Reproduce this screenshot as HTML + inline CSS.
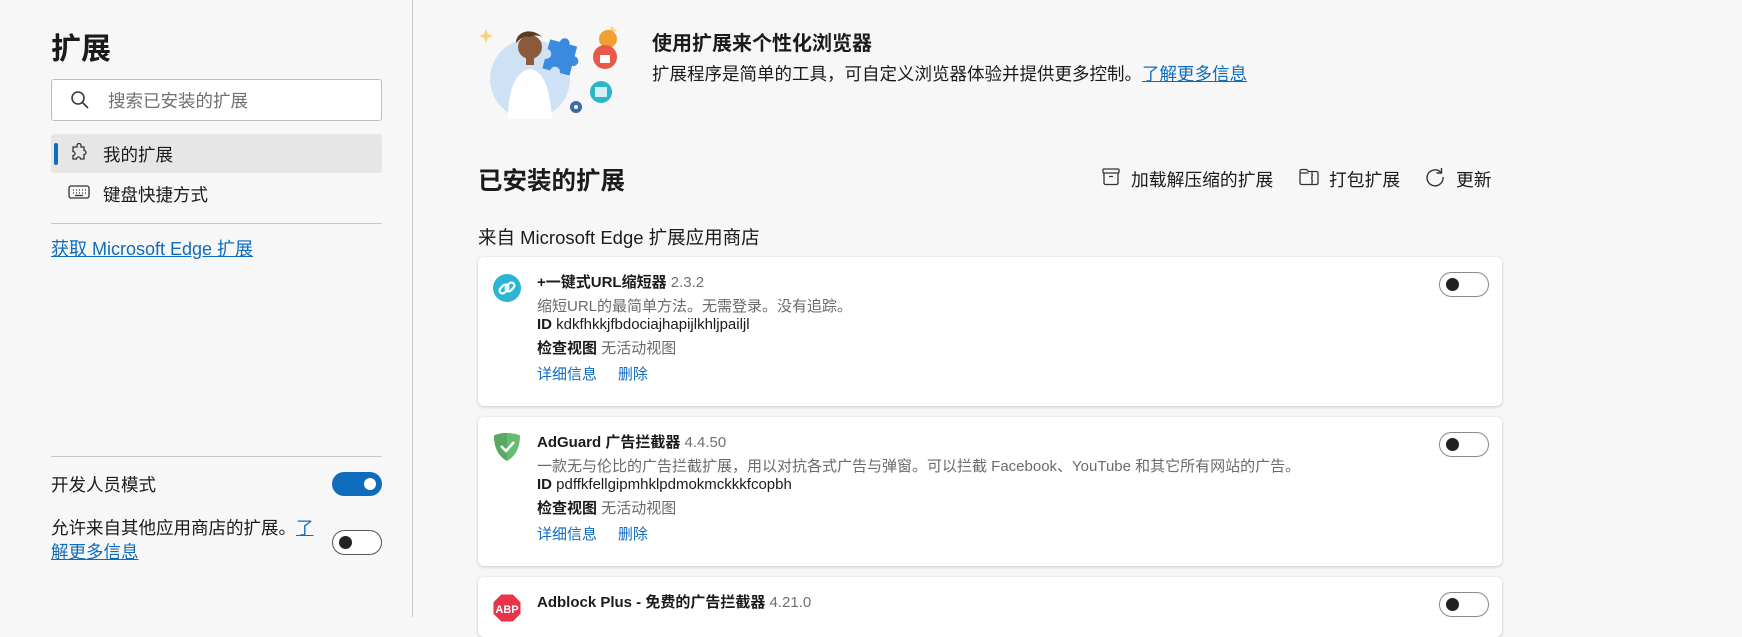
<!DOCTYPE html>
<html><head><meta charset="utf-8"><style>
*{box-sizing:border-box;margin:0;padding:0}
body{width:1742px;height:617px;overflow:hidden;background:#f7f7f7;font-family:"Liberation Sans","Noto Sans CJK SC",sans-serif;color:#1b1b1b;position:relative}
.a{position:absolute;white-space:nowrap}
.link{color:#0f6cbd;text-decoration:underline}
.card{position:absolute;left:478px;width:1024px;background:#fff;border-radius:6px;box-shadow:0 1px 3px rgba(0,0,0,.18),0 0 1px rgba(0,0,0,.1)}
.tog{position:absolute;width:50px;height:25px;border:1px solid #8a8a8a;border-radius:13px;background:#fff}
.tog i{position:absolute;left:6px;top:5px;width:13px;height:13px;border-radius:50%;background:#222}
.nm{position:absolute;left:59px;top:14px;font-size:15px;font-weight:bold}
.nm span{font-weight:normal;color:#707070}
.ln{position:absolute;left:59px;font-size:15px;color:#1b1b1b}
.g{color:#6a6a6a}
.bl{position:absolute;left:59px;top:106px;font-size:15px;color:#0f6cbd}
</style></head><body>
<div class="a" style="left:412px;top:0;width:1px;height:617px;background:#c8c8c8"></div>
<div class="a" style="left:51px;top:24px;font-size:30px;font-weight:bold">扩展</div>
<div class="a" style="left:51px;top:79px;width:331px;height:42px;background:#fff;border:1px solid #bdbdbd;border-radius:3px"></div>
<svg class="a" style="left:70px;top:90px" width="20" height="20" viewBox="0 0 20 20"><circle cx="8" cy="8" r="6" fill="none" stroke="#333" stroke-width="1.5"/><path d="M12.5 12.5L18 18" stroke="#333" stroke-width="1.6"/></svg>
<div class="a" style="left:108px;top:88px;font-size:17.5px;color:#707070">搜索已安装的扩展</div>
<div class="a" style="left:51px;top:134px;width:331px;height:39px;background:#e6e6e6;border-radius:3px"></div>
<div class="a" style="left:54px;top:143px;width:4px;height:22px;background:#0f6cbd;border-radius:2px"></div>
<svg class="a" style="left:69px;top:143px" width="20" height="20" viewBox="0 0 20 20"><path d="M8 2.5a2 2 0 0 1 4 0V4h3v3.5a2 2 0 0 1 0 4V16h-3.5a2 2 0 0 0-4 0H4v-3.5a2 2 0 0 0 0-4V4h4z" fill="none" stroke="#333" stroke-width="1.3"/></svg>
<div class="a" style="left:103px;top:142px;font-size:17.5px">我的扩展</div>
<svg class="a" style="left:68px;top:184px" width="22" height="16" viewBox="0 0 22 16"><rect x="1" y="2" width="20" height="12" rx="2" fill="none" stroke="#333" stroke-width="1.3"/><path d="M5 6h1M8 6h1M11 6h1M14 6h1M17 6h1M5 9h1M8 9h1M11 9h1M14 9h1M17 9h1M7 11.5h8" stroke="#333" stroke-width="1.2"/></svg>
<div class="a" style="left:103px;top:182px;font-size:17.5px">键盘快捷方式</div>
<div class="a" style="left:51px;top:223px;width:331px;height:1px;background:#c8c8c8"></div>
<div class="a link" style="left:51px;top:235px;font-size:18px">获取 Microsoft Edge 扩展</div>
<div class="a" style="left:51px;top:456px;width:331px;height:1px;background:#c8c8c8"></div>
<div class="a" style="left:51px;top:472px;font-size:17.5px">开发人员模式</div>
<div class="a" style="left:332px;top:472px;width:50px;height:24px;background:#0f6cbd;border-radius:12px"><i style="position:absolute;right:6px;top:6px;width:12px;height:12px;background:#fff;border-radius:50%"></i></div>
<div class="a" style="left:51px;top:516px;font-size:17.5px;line-height:24px;white-space:normal;width:275px">允许来自其他应用商店的扩展。<span class="link">了<br>解更多信息</span></div>
<div class="tog" style="left:332px;top:530px;border-color:#555"><i></i></div>

<svg class="a" style="left:478px;top:17px" width="146" height="102" viewBox="0 0 146 102">
<circle cx="52" cy="62" r="40" fill="#cfe2f5"/>
<path d="M8 12l2 5 5 2-5 2-2 5-2-5-5-2 5-2z" fill="#f6d47a"/>
<path d="M134 8l1.5 4 4 1.5-4 1.5-1.5 4-1.5-4-4-1.5 4-1.5z" fill="#f6d47a"/>
<path d="M30 102c0-30 8-48 22-50 14 2 20 20 22 50z" fill="#fff"/>
<circle cx="52" cy="30" r="12" fill="#8a5a3b"/><path d="M38 26c0-12 16-16 26-6-4-2-8-2-12 0-6-2-10 2-14 6z" fill="#5a3a22"/>
<rect x="48" y="40" width="8" height="8" fill="#8a5a3b"/>
<path d="M78 26a5 5 0 0 1 10 0h8v10a5 5 0 0 1 0 10v10h-10a5 5 0 0 0-10 0h-8v-10a5 5 0 0 0 0-10V26z" fill="#3a8be0" transform="rotate(15 84 40)"/>
<circle cx="130" cy="22" r="9" fill="#f0a030"/><circle cx="127" cy="40" r="12" fill="#e8584a"/><rect x="122" y="38" width="10" height="8" fill="#fff"/>
<circle cx="123" cy="75" r="11" fill="#2bb5c8"/><rect x="117" y="70" width="12" height="10" fill="#fff" opacity=".8"/>
<circle cx="98" cy="90" r="6" fill="#3a6aa8"/><circle cx="98" cy="90" r="2" fill="#fff"/>
</svg>
<div class="a" style="left:652px;top:27px;font-size:20px;font-weight:bold">使用扩展来个性化浏览器</div>
<div class="a" style="left:652px;top:61px;font-size:17.5px">扩展程序是简单的工具，可自定义浏览器体验并提供更多控制。<span class="link">了解更多信息</span></div>

<div class="a" style="left:478px;top:162px;font-size:24.5px;font-weight:bold">已安装的扩展</div>
<svg class="a" style="left:1101px;top:167px" width="20" height="20" viewBox="0 0 20 20"><rect x="2" y="2" width="16" height="4" rx="1" fill="none" stroke="#333" stroke-width="1.3"/><path d="M3 6v10a1.5 1.5 0 0 0 1.5 1.5h11A1.5 1.5 0 0 0 17 16V6M8 9.5h4" fill="none" stroke="#333" stroke-width="1.3"/></svg>
<div class="a" style="left:1131px;top:166px;font-size:17.8px">加载解压缩的扩展</div>
<svg class="a" style="left:1298px;top:167px" width="22" height="20" viewBox="0 0 22 20"><path d="M2 4a1.5 1.5 0 0 1 1.5-1.5h5l2 2H18.5A1.5 1.5 0 0 1 20 6v10a1.5 1.5 0 0 1-1.5 1.5h-15A1.5 1.5 0 0 1 2 16z M2 6h8.5" fill="none" stroke="#333" stroke-width="1.3"/><path d="M14 5v12M14 8h1M13 11h1M14 14h1" stroke="#333" stroke-width="1.2"/></svg>
<div class="a" style="left:1329px;top:166px;font-size:17.8px">打包扩展</div>
<svg class="a" style="left:1424px;top:166px" width="22" height="22" viewBox="0 0 22 22"><path d="M17 6.5A8 8 0 1 0 19 11" fill="none" stroke="#333" stroke-width="1.4"/><path d="M17.5 2v5h-5" fill="none" stroke="#333" stroke-width="1.4"/></svg>
<div class="a" style="left:1456px;top:166px;font-size:17.8px">更新</div>
<div class="a" style="left:478px;top:224px;font-size:18.5px">来自 Microsoft Edge 扩展应用商店</div>

<div class="card" style="top:257px;height:149px">
<svg class="a" style="left:14px;top:16px" width="30" height="30" viewBox="0 0 30 30"><circle cx="15" cy="15" r="14" fill="#2bb5d3"/><g fill="none" stroke="#fff" stroke-width="2.2"><rect x="7" y="13" width="10" height="6" rx="3" transform="rotate(-45 12 16)"/><rect x="13" y="11" width="10" height="6" rx="3" transform="rotate(-45 18 14)"/></g></svg>
<div class="nm">+一键式URL缩短器 <span>2.3.2</span></div>
<div class="ln g" style="top:38px">缩短URL的最简单方法。无需登录。没有追踪。</div>
<div class="ln" style="top:59px"><b>ID</b> kdkfhkkjfbdociajhapijlkhljpailjl</div>
<div class="ln" style="top:80px"><b>检查视图</b> <span class="g">无活动视图</span></div>
<div class="bl">详细信息&nbsp;&nbsp;&nbsp;&nbsp;&nbsp;删除</div>
<div class="tog" style="left:961px;top:15px"><i></i></div>
</div>

<div class="card" style="top:417px;height:149px">
<svg class="a" style="left:14px;top:14px" width="30" height="32" viewBox="0 0 30 32"><path d="M15 2C10 2 5 3 2 4.5 2 16 6 25 15 30 24 25 28 16 28 4.5 25 3 20 2 15 2z" fill="#68bc71"/><path d="M15 2v28C6 25 2 16 2 4.5 5 3 10 2 15 2z" fill="#5aa865"/><path d="M9 15l5 5 8-9" fill="none" stroke="#fff" stroke-width="2.5"/></svg>
<div class="nm">AdGuard 广告拦截器 <span>4.4.50</span></div>
<div class="ln g" style="top:38px">一款无与伦比的广告拦截扩展，用以对抗各式广告与弹窗。可以拦截 Facebook、YouTube 和其它所有网站的广告。</div>
<div class="ln" style="top:59px"><b>ID</b> pdffkfellgipmhklpdmokmckkkfcopbh</div>
<div class="ln" style="top:80px"><b>检查视图</b> <span class="g">无活动视图</span></div>
<div class="bl">详细信息&nbsp;&nbsp;&nbsp;&nbsp;&nbsp;删除</div>
<div class="tog" style="left:961px;top:15px"><i></i></div>
</div>

<div class="card" style="top:577px;height:60px">
<svg class="a" style="left:14px;top:16px" width="30" height="30" viewBox="0 0 30 30"><path d="M9 1h12l8 8v12l-8 8H9l-8-8V9z" fill="#e8334a" stroke="#fff" stroke-width="1"/><text x="15" y="20" text-anchor="middle" font-family="Liberation Sans" font-weight="bold" font-size="11" fill="#fff">ABP</text></svg>
<div class="nm">Adblock Plus - 免费的广告拦截器 <span>4.21.0</span></div>
<div class="tog" style="left:961px;top:15px"><i></i></div>
</div>
</body></html>
